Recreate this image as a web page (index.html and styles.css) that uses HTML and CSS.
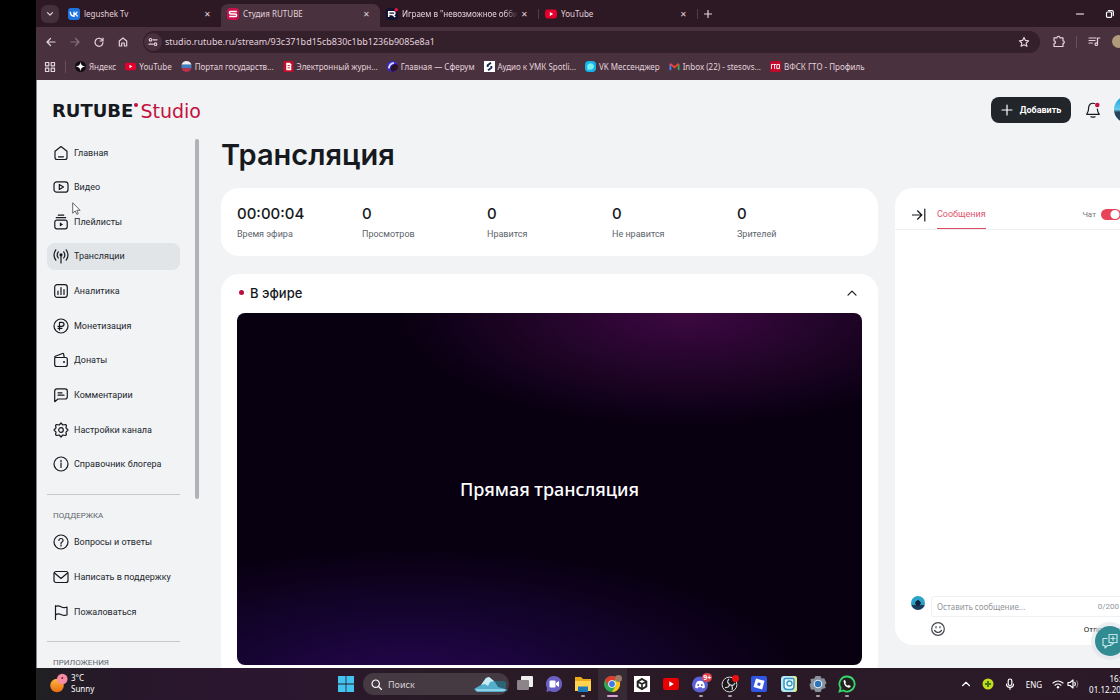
FILE: index.html
```html
<!DOCTYPE html>
<html lang="ru">
<head>
<meta charset="utf-8">
<title>Студия RUTUBE</title>
<link rel="stylesheet" href="styles.css">
</head>
<body>
<div class="screen">
  <header class="browser">
    <div class="tabs">
      <button class="tab-search" aria-label="Поиск вкладок"><svg width="8" height="8" viewBox="0 0 8 8"><path d="M1.5 2.7 4 5.2 6.5 2.7" class="ln"/></svg></button>
      <div class="tab"><svg class="fav" viewBox="0 0 12 12"><rect width="12" height="12" rx="3" fill="#1f74e0"/><path d="M2.3 3.8C2.4 7 3.9 8.3 6 8.3V3.8M6 6.1C7.6 6 8.7 5 9.2 3.8M6 6.1C7.8 6.2 9.1 7.1 9.6 8.4" fill="none" stroke="#fff" stroke-width="1.4"/></svg><span class="tab-title">legushek Tv</span><button class="x" aria-label="Закрыть">✕</button></div>
      <div class="tab active"><svg class="fav" viewBox="0 0 12 12"><rect width="12" height="12" rx="3" fill="#c9104b"/><path d="M9.8 3.4H3.4Q2.4 3.4 2.4 4.6T3.4 5.9H8.6Q9.6 5.9 9.6 7.2T8.6 8.5H2.2" fill="none" stroke="#fff" stroke-width="1.5"/></svg><span class="tab-title">Студия RUTUBE</span><button class="x" aria-label="Закрыть">✕</button></div>
      <div class="tab split"><svg class="fav" viewBox="0 0 12 12"><rect width="12" height="12" rx="3" fill="#10132f"/><circle cx="10.2" cy="1.8" r="1.8" fill="#ed143b"/><path d="M2.7 9V3.8H7.6Q9 3.8 9 5.2T7.6 6.6H2.7M6.7 6.6 9.2 9" fill="none" stroke="#fff" stroke-width="1.5"/></svg><span class="tab-title fade">Играем в "невозможное обби</span><button class="x" aria-label="Закрыть">✕</button></div>
      <div class="tab split"><svg class="fav" viewBox="0 0 12 12"><rect y="1.5" width="12" height="9" rx="2.4" fill="#e3002d"/><path d="M4.8 4v4l3.4-2z" fill="#fff"/></svg><span class="tab-title">YouTube</span><button class="x" aria-label="Закрыть">✕</button></div>
      <button class="new-tab" aria-label="Новая вкладка"><svg width="8" height="8" viewBox="0 0 8 8"><path d="M4 .5v7M.5 4h7" class="ln"/></svg></button>
      <div class="win-buttons">
        <button aria-label="Свернуть"><svg width="10" height="10" viewBox="0 0 10 10"><path d="M1.5 5h7" class="ln"/></svg></button>
        <button aria-label="Развернуть"><svg width="10" height="10" viewBox="0 0 10 10"><rect x="1.5" y="3" width="5" height="5.4" rx="1" class="ln"/><path d="M3.4 1.6H7Q8.3 1.6 8.3 3v3.6" class="ln"/></svg></button>
      </div>
    </div>
    <div class="toolbar">
      <div class="nav-buttons">
        <button aria-label="Назад"><svg width="12" height="12" viewBox="0 0 12 12"><path d="M10 6H2M5.5 2.5 2 6l3.5 3.5" class="ln"/></svg></button>
        <button class="off" aria-label="Вперёд"><svg width="12" height="12" viewBox="0 0 12 12"><path d="M2 6h8M6.5 2.5 10 6 6.500 9.500" class="ln"/></svg></button>
        <button aria-label="Обновить"><svg width="12" height="12" viewBox="0 0 12 12"><path d="M9.600 4.500A4 4 0 1 0 10 6.500M10 2v3H7" class="ln"/></svg></button>
        <button aria-label="Домой"><svg width="12" height="12" viewBox="0 0 12 12"><path d="M2.300 5 6 2l3.700 3v5H7.300V7H4.700v3H2.300z" class="ln"/></svg></button>
      </div>
      <div class="omnibox">
        <button class="site" aria-label="Сведения о сайте"><svg width="10" height="10" viewBox="0 0 10 10"><path d="M5 2.800h4M1 7.200h4" class="ln"/><circle cx="2.500" cy="2.800" r="1.300" class="ln"/><circle cx="7.500" cy="7.200" r="1.300" class="ln"/></svg></button>
        <input class="url" aria-label="Адрес" value="studio.rutube.ru/stream/93c371bd15cb830c1bb1236b9085e8a1">
        <button aria-label="В закладки"><svg width="12" height="12" viewBox="0 0 12 12"><path d="m6 1.400 1.400 3 3.200.4-2.400 2.200.7 3.300L6 8.700l-2.900 1.600.7-3.300L1.400 4.800l3.200-.4z" class="ln"/></svg></button>
      </div>
      <div class="ext">
        <button aria-label="Расширения"><svg width="13" height="13" viewBox="0 0 13 13"><path d="M2 2.800h3q0-1.500 1.500-1.500T8 2.800h3v3q1.300 0 1.300 1.300T11 8.400v3.100H2V8.600q1.500-.1 1.500-1.400T2 5.800z" class="ln"/></svg></button>
        <i class="sep"></i>
        <button aria-label="Медиа"><svg width="13" height="13" viewBox="0 0 13 13"><path d="M1 3h7M1 5.500h6M1 8h3.500M9.500 9V3h2.300" class="ln"/><circle cx="8.300" cy="9.200" r="1.300" class="ln"/></svg></button>
        <span class="profile"></span>
      </div>
    </div>
    <nav class="bookmarks">
      <button aria-label="Все вкладки"><svg width="12" height="12" viewBox="0 0 12 12"><path d="M1.500 1.500h3.300v3.300H1.500zM7.200 1.500h3.300v3.300H7.200zM1.500 7.200h3.300v3.300H1.500zM7.200 7.200h3.300v3.300H7.200z" class="ln"/></svg></button>
      <i class="sep"></i>
      <a href="#"><svg viewBox="0 0 12 12"><circle cx="6" cy="6" r="6" fill="#140d12"/><path d="M6 .8Q6.300 5.700 11.200 6 6.300 6.300 6 11.200 5.700 6.300.8 6 5.700 5.700 6 .8z" fill="#fff"/></svg><span>Яндекс</span></a>
      <a href="#"><svg viewBox="0 0 12 12"><rect y="2" width="12" height="8" rx="2" fill="#e3002d"/><path d="M4.900 4.200v3.600L8 6z" fill="#fff"/></svg><span>YouTube</span></a>
      <a href="#"><svg viewBox="0 0 12 12"><path d="M.6 4a5.700 5.700 0 0 1 10.800 0z" fill="#eee"/><path d="M.6 4h10.800v4H.6z" fill="#3d7fc2"/><path d="M.6 8a5.700 5.700 0 0 0 10.800 0z" fill="#c12f50"/></svg><span>Портал государств...</span></a>
      <a href="#"><svg viewBox="0 0 12 12"><rect x=".5" width="11" height="12" rx="1" fill="#c20d2b"/><path d="M3.500 2h4l1.500 1.500V10H3.500z" fill="#fff"/><path d="M5 5h2.500M5 7.500h2.500" stroke="#c20d2b"/></svg><span>Электронный журн...</span></a>
      <a href="#"><svg viewBox="0 0 12 12"><circle cx="6" cy="6" r="6" fill="#3c2ad1"/><path d="M12 4.500A5 5 0 0 0 5 11.500 6 6 0 0 0 12 4.500z" fill="#2c1425"/><path d="M2 8Q2.500 3 7.500 2" stroke="#d5dcff" stroke-width="2" fill="none"/></svg><span>Главная — Сферум</span></a>
      <a href="#"><svg viewBox="0 0 12 12"><rect width="12" height="12" fill="#fff"/><path d="M7.600 2 4 4.500v2M4.500 10 8 7.500v-2" stroke="#172553" stroke-width="2" fill="none"/></svg><span>Аудио к УМК Spotli...</span></a>
      <a href="#"><svg viewBox="0 0 12 12"><rect width="12" height="12" rx="4" fill="#16b2ea"/><path d="M6 2.500a4 3.500 0 1 1-1.500 6.800L2.500 10l.4-2.200A4 3.500 0 0 1 6 2.500z" fill="#77efec"/></svg><span>VK Мессенджер</span></a>
      <a href="#"><svg viewBox="0 0 12 12"><path d="M1.500 10V3.500" stroke="#4285f4" stroke-width="2"/><path d="M10.500 10V3.500" stroke="#34a853" stroke-width="2"/><path d="M1.200 3 6 6.800 10.800 3" stroke="#ea4335" stroke-width="2" fill="none"/></svg><span>Inbox (22) - stesovs...</span></a>
      <a href="#"><svg viewBox="0 0 12 12"><rect width="12" height="12" rx="2" fill="#c3092b"/><path d="M1.600 8.700V3.800h2.300M5 8.700V3.800M4 3.800h2.500M5 8.200M7.400 3.800h2.900v4.500H7.400z" stroke="#fff" fill="none"/></svg><span>ВФСК ГТО - Профиль</span></a>
    </nav>
  </header>

  <div class="page">
    <div class="top">
      <a href="#" class="logo"><b>RUTUBE</b><i></i><span>Studio</span></a>
      <div class="top-actions">
        <button class="add"><svg width="12" height="12" viewBox="0 0 12 12"><path d="M6 1v10M1 6h10" class="ln"/></svg>Добавить</button>
        <button class="bell" aria-label="Уведомления"><svg width="16" height="18" viewBox="0 0 16 18"><path d="M9.500 2.500C5.500 1.500 3.700 4 3.700 6.500 3.700 10 3 11.500 1.700 13.300h12.600C13 11.500 12.400 10 12.300 8" class="ln"/><path d="M6 15.700q2 1 4 0" class="ln"/><circle cx="12.300" cy="4" r="2.300" fill="#c3123f"/></svg></button>
        <span class="avatar"></span>
      </div>
    </div>
    <div class="body">
      <aside class="side">
        <nav>
          <ul class="menu ten">
            <li><a href="#"><svg viewBox="0 0 16 16"><path d="M2 6.300 8 1.500l6 4.800v6.200q0 2-2 2H4q-2 0-2-2zM5.500 11.800h5" class="ln"/></svg>Главная</a></li>
            <li><a href="#"><svg viewBox="0 0 16 16"><rect x="1" y="2.800" width="14" height="10.400" rx="2.800" class="ln"/><path d="M6.300 5.500v5L10.500 8z" class="ln"/></svg>Видео</a></li>
            <li><a href="#"><svg viewBox="0 0 16 16"><rect x="1.800" y="6.200" width="12.400" height="8.600" rx="2" class="ln"/><path d="M3.300 3.700h9.400M5.300 1.200h5.400" class="ln"/><path d="M6.800 8.300v4.200l3.300-2.100z" fill="#16191d"/></svg>Плейлисты</a></li>
            <li><a href="#" class="on"><svg viewBox="0 0 16 16"><circle cx="8" cy="6.800" r="1.600" fill="#16191d"/><path d="M8 7v8M5.300 10Q3 7 5.300 3.800M10.700 10Q13 7 10.700 3.800M2.800 12.200Q-.8 7 2.800 1.800M13.200 12.200Q16.800 7 13.200 1.800" class="ln"/></svg>Трансляции</a></li>
            <li><a href="#"><svg viewBox="0 0 16 16"><rect x="1.700" y="1.700" width="12.600" height="12.600" rx="2.500" class="ln"/><path d="M5 8v3.500M8 4.500v7M11 6.500v5" class="ln"/></svg>Аналитика</a></li>
            <li><a href="#"><svg viewBox="0 0 16 16"><circle cx="8" cy="8" r="7" class="ln"/><path d="M6.500 12V4.300h2.300q2.200 0 2.200 2T8.800 8.400H5M5 10.300h4" class="ln"/></svg>Монетизация</a></li>
            <li><a href="#"><svg viewBox="0 0 16 16"><path d="M1.700 6v6.500q0 2 2 2h8.600q2 0 2-2V7.500q0-2-2-2H3q-1.300 0-1.300-1L9.500 1.500q1-.3 1.200.8l.5 3" class="ln"/><circle cx="11" cy="10" r="1" fill="#16191d"/></svg>Донаты</a></li>
            <li><a href="#"><svg viewBox="0 0 16 16"><path d="M1.700 14.700V4q0-2.200 2.200-2.200h8.200q2.200 0 2.200 2.200v5.800q0 2.200-2.200 2.200H5zM5 5.800h4M5 8.200h6" class="ln"/></svg>Комментарии</a></li>
            <li><a href="#"><svg viewBox="0 0 16 16"><path d="m8 1 1.800 2 2.600-.5 1 .8-.4 2.500L15 8l-2 2.200.4 2.500-1 .8-2.600-.5L8 15l-1.800-2-2.600.5-1-.8.400-2.500L1 8l2-2.200-.4-2.500 1-.8 2.600.5z" class="ln"/><circle cx="8" cy="8" r="2.300" class="ln"/></svg>Настройки канала</a></li>
            <li><a href="#"><svg viewBox="0 0 16 16"><circle cx="8" cy="8" r="7" class="ln"/><path d="M8 7.200v4.300M8 4.300v1.400" class="ln"/></svg>Справочник блогера</a></li>
          </ul>
          <h2>ПОДДЕРЖКА</h2>
          <ul class="menu">
            <li><a href="#"><svg viewBox="0 0 16 16"><circle cx="8" cy="8" r="7" class="ln"/><path d="M5.900 6.500Q6 4.500 8 4.500t2.100 1.800Q10.100 7.400 9 8T8 9.500M8 10.800v1.300" class="ln"/></svg>Вопросы и ответы</a></li>
            <li><a href="#"><svg viewBox="0 0 16 16"><rect x="1" y="2.500" width="14" height="11" rx="2" class="ln"/><path d="m1.500 4 6.500 5.500L14.500 4" class="ln"/></svg>Написать в поддержку</a></li>
            <li><a href="#"><svg viewBox="0 0 16 16"><path d="M2.500 15.500V1.500M2.500 2.500Q5 1 8 2.700t6 .3v8q-3 1-6-.5t-5.500.5" class="ln"/></svg>Пожаловаться</a></li>
          </ul>
          <h2>ПРИЛОЖЕНИЯ</h2>
        </nav>
        <div class="scrollbar"></div>
      </aside>
      <main>
        <h1>Трансляция</h1>
        <div class="columns">
          <div class="stream">
            <dl class="card stats">
              <div><dd>00:00:04</dd><dt>Время эфира</dt></div>
              <div><dd>0</dd><dt>Просмотров</dt></div>
              <div><dd>0</dd><dt>Нравится</dt></div>
              <div><dd>0</dd><dt>Не нравится</dt></div>
              <div><dd>0</dd><dt>Зрителей</dt></div>
            </dl>
            <section class="card live">
              <div class="live-head"><h3>В эфире</h3><button aria-label="Свернуть"><svg width="12" height="12" viewBox="0 0 12 12"><path d="M2 8.200 6 4.200l4 4" class="ln"/></svg></button></div>
              <div class="video">Прямая трансляция</div>
            </section>
          </div>
          <section class="card chat">
            <div class="chat-head">
              <button class="collapse" aria-label="Скрыть чат"><svg width="14" height="14" viewBox="0 0 14 14"><path d="M0 7h9.500M5.500 2.800 9.800 7l-4.300 4.200M12.800 1v12" class="ln"/></svg></button>
              <button class="chat-tab">Сообщения</button>
              <label class="switch">Чат<input type="checkbox" checked></label>
            </div>
            <div class="messages"></div>
            <form class="compose">
              <span class="me"></span>
              <div class="field"><input type="text" aria-label="Сообщение" placeholder="Оставить сообщение..."><span>0/200</span></div>
              <div class="row">
                <button type="button" aria-label="Смайлы"><svg width="14" height="14" viewBox="0 0 14 14"><circle cx="7" cy="7" r="6.300" class="ln"/><path d="M3.500 8.500Q7 12.500 10.500 8.500M5 4.600v1.200M9 4.600v1.200" class="ln"/></svg></button>
                <button type="button" class="send">Отправить</button>
              </div>
            </form>
          </section>
        </div>
      </main>
    </div>
    <button class="help" aria-label="Помощь"><svg width="16" height="16" viewBox="0 0 16 16"><path d="M7 1.500h8v8h-3L10.500 11V9.500H7zM5 5.500H1v7h2V15l2.500-2.500H9v-2M11 3.500v4M9 5.500h4" class="ln"/></svg></button>
    <svg class="cursor" width="9" height="13" viewBox="0 0 9 13"><path d="M.7.8v10.400l2.500-2.300 1.600 3.400 1.500-.7-1.500-3.300h3.300z" fill="#fff" stroke="#3d4147" stroke-width=".8"/></svg>
  </div>

  <footer class="taskbar">
    <div class="weather"><svg width="18" height="20" viewBox="0 0 18 20"><defs><linearGradient id="sun" x2="0" y2="1"><stop stop-color="#ffb73b"/><stop offset="1" stop-color="#e86c14"/></linearGradient></defs><circle cx="7" cy="12.500" r="6.800" fill="url(#sun)"/><circle cx="12.300" cy="6" r="5.300" fill="#f58ba5"/><circle cx="12.300" cy="5" r="1" fill="#7c2447"/></svg><p>3°C<br>Sunny</p></div>
    <button class="start" aria-label="Пуск"><svg width="16" height="16" viewBox="0 0 16 16"><path d="M0 0h7.600v7.600H0zM8.400 0H16v7.600H8.400zM0 8.400h7.600V16H0zM8.400 8.400H16V16H8.400z" fill="#42c3f0"/></svg></button>
    <label class="search"><svg width="11" height="11" viewBox="0 0 11 11"><circle cx="4.700" cy="4.700" r="3.700" class="ln"/><path d="m7.500 7.500 3 3" class="ln"/></svg><input type="text" placeholder="Поиск" aria-label="Поиск"><svg width="34" height="16" viewBox="0 0 34 16"><path d="M15 5h14q3 0 3 3v6H15z" fill="#2b6575"/><path d="M0 13 7 9l5-7 3-1 6 5 3 5 10 3-5 2H3z" fill="#53aecd"/><path d="m7 9 5-7 3-1 5 4-4 1-2 4-3-2z" fill="#c7ecf5"/><path d="M2 14h29" stroke="#9edcec" stroke-width="1.500"/></svg></label>
    <div class="apps">
      <button aria-label="Представление задач"><svg viewBox="0 0 18 18"><rect x="5" y="1" width="12" height="11" rx="1" fill="#eee"/><rect x="1" y="5" width="12" height="10" rx="1" fill="#8c8488"/></svg></button>
      <button aria-label="Чат"><svg viewBox="0 0 18 18"><path d="M9 1a8 8 0 1 1-4 14.900L1.500 17 2 13A8 8 0 0 1 9 1z" fill="#6b5fc4"/><rect x="4.500" y="5.500" width="6" height="7" rx="1" fill="#fff"/><path d="m11 8 3-2v6l-3-2z" fill="#fff"/></svg></button>
      <button class="run" aria-label="Проводник"><svg viewBox="0 0 18 18"><path d="M1 2h6l2 2h8v12H1z" fill="#e9a91d"/><path d="M1 6h16v10H1z" fill="#ffd34d"/><path d="M4 11.500h10V17H4z" fill="#1d79bd"/></svg></button>
      <button class="run wide" aria-label="Chrome"><svg viewBox="0 0 18 18"><circle cx="8" cy="9" r="8" fill="#2fa653"/><path d="M1.100 5A8 8 0 0 1 15 5H8L4.500 11z" fill="#e33b2e"/><path d="M15 5a8 8 0 0 1-7 12l3.500-6L11 5z" fill="#fbc619"/><circle cx="8" cy="9" r="3.800" fill="#fff"/><circle cx="8" cy="9" r="2.900" fill="#3b79e8"/><circle cx="14.500" cy="3.500" r="3.500" fill="#9c7a65"/></svg></button>
      <button aria-label="Unity"><svg viewBox="0 0 18 18"><path d="M1 1h16v16H1z" fill="#fff"/><path d="m9 4 4.300 2.500v5L9 14l-4.300-2.500v-5z" fill="none" stroke="#222" stroke-width="2"/><path d="M9 9v5M9 9 4.500 6.500M9 9l4.500-2.500" stroke="#222" stroke-width="1.600"/></svg></button>
      <button aria-label="YouTube"><svg viewBox="0 0 18 18"><rect x="1" y="3" width="16" height="12" rx="2" fill="#e80000"/><path d="M7.300 6.300v5.400l4.500-2.700z" fill="#fff"/></svg></button>
      <button class="run" aria-label="Discord"><svg viewBox="0 0 18 18"><circle cx="8" cy="9.500" r="8" fill="#5b62d6"/><path d="M5 6.500q3-1.300 6 0 2 2.500 2 6l-2.300 1-1-1.300H6.300l-1 1.300-2.300-1q0-3.500 2-6z" fill="#fff"/><circle cx="6.200" cy="10" r="1" fill="#5b62d6"/><circle cx="9.800" cy="10" r="1" fill="#5b62d6"/></svg><em>9+</em></button>
      <button class="run" aria-label="OBS"><svg viewBox="0 0 18 18"><circle cx="8.500" cy="9.500" r="7.400" fill="#1b181c" stroke="#d7d3d6"/><path d="M8 4q-3 3 .5 5.500T14 8M8.500 9.500Q8 13 4 12.500M8.500 9.500q4 1 2.500 5.500" fill="none" stroke="#d7d3d6" stroke-width="1.200"/><circle cx="14.500" cy="3.500" r="3.500" fill="#ed1010"/></svg></button>
      <button class="run" aria-label="Roblox"><svg viewBox="0 0 18 18"><rect x="1" y="1" width="16" height="16" rx="2" fill="#3157e2"/><path d="m6 3.500 8.500 2.300-2.300 8.700L3.500 12z" fill="#fff"/><path d="m7.900 7.400 2.800.7-.7 2.800-2.800-.7z" fill="#3157e2"/></svg></button>
      <button class="run" aria-label="Студия"><svg viewBox="0 0 18 18"><rect x="1" y="1" width="16" height="16" rx="3" fill="#b9eaf0"/><path d="M13 1h1q3 0 3 3v10q0 3-3 3h-1z" fill="#d9e99a"/><path d="M4 5q0-1.500 1.500-1.500h7Q14 3.500 14 5v6q0 3.500-3.500 3.500h-3Q4 14.500 4 11z" fill="#e8faff" stroke="#3795c8" stroke-width="1.500"/><circle cx="9.500" cy="8.500" r="2.500" fill="none" stroke="#3795c8" stroke-width="1.300"/></svg></button>
      <button class="run" aria-label="Параметры"><svg viewBox="0 0 18 18"><path d="M6.500 1h5l1 2.500 2.700-.2L17.500 8l-1.600 2 .8 3-3.700 1-1.500 3h-5L5 14.500l-3 .2L.5 9.500 2 7.700 1.500 4l3.800-.5z" fill="#89919d"/><circle cx="9" cy="9" r="4.300" fill="#e6edf2"/><circle cx="9" cy="9" r="3.200" fill="#2a75b8"/></svg></button>
      <button class="run" aria-label="WhatsApp"><svg viewBox="0 0 18 18"><path d="M9 1.500a7.500 7.500 0 1 1-3.600 14L1.500 16.500 2.600 13A7.500 7.500 0 0 1 9 1.500z" fill="#23201f" stroke="#38d56f" stroke-width="1.800"/><path d="M5.500 6q1-1.500 1.800-.5L8 7.300l-.7 1q.8 1.700 2.400 2.400l1-.8 2 1q.3 1.700-2 1.900-4.500-.8-5.200-6.800z" fill="#f4fff5"/></svg></button>
    </div>
    <div class="tray">
      <svg viewBox="0 0 12 12"><path d="M2.500 7.700 6 4.300l3.500 3.400" class="ln"/></svg>
      <svg viewBox="0 0 12 12"><circle cx="6" cy="6" r="5.500" fill="#c4dc1d"/><path d="M6 3v6M3 6h6" stroke="#42780d" stroke-width="2"/></svg>
      <svg viewBox="0 0 12 12"><rect x="4.200" y="1" width="3.600" height="6.500" rx="1.800" class="ln"/><path d="M2.500 6q0 3.300 3.500 3.300T9.500 6M6 9.300v2" class="ln"/></svg>
      <span>ENG</span>
      <div class="status">
        <svg viewBox="0 0 12 12"><path d="M1 5q5-4 10 0M3 7.200q3-2.400 6 0" class="ln"/><circle cx="6" cy="9.200" r="1.200" fill="#fff"/></svg>
        <svg viewBox="0 0 12 12"><path d="M1 4.500h2L6 2v8L3 7.500H1zM7.800 4.300q1.200 1.700 0 3.400" class="ln"/><path d="M9.700 2.800q2 3.200 0 6.400" class="ln dim"/></svg>
      </div>
      <p class="clock">16:05<br>01.12.2024</p>
    </div>
  </footer>
</div>
</body>
</html>
```
FILE: styles.css
```css
* { box-sizing: border-box; }
body {
  margin: 0;
  height: 100vh;
  overflow: hidden;
  background: #000;
  font-family: Roboto, "Liberation Sans", sans-serif;
  color: #16191d;
}
button {
  border: 0;
  padding: 0;
  background: none;
  color: inherit;
  font: inherit;
  display: flex;
  align-items: center;
  justify-content: center;
}
a { color: inherit; text-decoration: none; }
input { font: inherit; color: inherit; border: 0; padding: 0; background: none; min-width: 0; outline: 0; }
h1, h2, h3, p, ul, dl, dd { margin: 0; padding: 0; }
ul { list-style: none; }
svg { flex: none; }
.ln { fill: none; stroke: currentColor; stroke-width: 1.2; stroke-linecap: round; stroke-linejoin: round; }
.dim { opacity: .4; }

/* The display starts past the black strip and runs off the right side */
.screen {
  margin-left: 36px;
  width: 100vw;
  height: 100vh;
  display: flex;
  flex-direction: column;
}

/* Browser */
.browser { background: #49313e; color: #e3d3dc; font: 9px/12px "Noto Sans", sans-serif; }
.tabs { display: flex; align-items: center; height: 27px; padding-left: 5px; background: #2d1924; }
.tab-search { width: 18px; height: 18px; margin-right: 3px; border-radius: 6px; background: #44303b; }
.tab { display: flex; align-items: center; width: 159px; height: 23px; margin-top: 4px; padding: 0 8px 4px 6px; }
.tab.active { background: #49313e; border-radius: 7px 7px 0 0; }
.fav { width: 12px; height: 12px; margin-right: 4px; }
.tab-title { flex: 1; overflow: hidden; white-space: nowrap; font-size: 8px; }
.fade { mask-image: linear-gradient(90deg, #000 88%, transparent); }
.x { width: 12px; font-size: 8px; }
.split { border-right: 1px solid transparent; border-image: linear-gradient(transparent 25%, #543d49 25% 65%, transparent 65%) 1; }
.new-tab { width: 20px; height: 20px; }
.win-buttons { display: flex; gap: 20px; margin-left: auto; padding-right: 41px; color: #fff; }
.toolbar { display: flex; align-items: center; height: 29px; padding: 0 16px 0 9px; }
.nav-buttons { display: flex; gap: 12px; width: 98px; }
.off { opacity: .4; }
.omnibox { flex: 1; display: flex; align-items: center; gap: 3px; height: 22px; padding: 0 10px 0 1px; border-radius: 11px; background: #33202b; }
.site { width: 18px; height: 18px; border-radius: 50%; background: #49313e; }
.url { flex: 1; }
.ext { display: flex; align-items: center; gap: 11px; width: 100px; padding-left: 12px; }
.sep { width: 1px; height: 12px; background: #6b4f5e; }
.profile { width: 13px; height: 13px; flex: none; border-radius: 50%; background: #b09a7b; }
.bookmarks { display: flex; align-items: center; height: 24px; padding: 0 0 3px 8px; font-size: 8px; gap: 9px; }
.bookmarks a { display: flex; align-items: center; gap: 3px; }
.bookmarks a svg { width: 11px; height: 11px; }
.bookmarks span { white-space: nowrap; }

/* Page */
.page { position: relative; flex: 1; min-height: 0; overflow: hidden; display: flex; flex-direction: column; background: #f1f3f5; border-left: 1px solid #85868a; }
.top { display: flex; align-items: center; justify-content: space-between; height: 59px; padding: 0 15px; }
.logo { display: flex; align-items: center; font: 19px/20px "DejaVu Sans", sans-serif; color: #c4113f; padding-top: 2px; }
.logo b { color: #16191d; font-size: 18px; }
.logo i { width: 4px; height: 4px; margin: 0 2px 12px 1px; border-radius: 50%; background: #c4113f; }
.top-actions { display: flex; align-items: center; }
.add { gap: 7px; width: 80px; height: 26px; border-radius: 8px; background: #22252a; color: #fff; font-size: 9px; font-weight: 700; }
.bell { width: 16px; margin: 0 13px 0 14px; }
.avatar { width: 27px; height: 27px; border-radius: 50%; background: linear-gradient(#159ee0, #66cce9 50%, #24455e 60%); }
.body { flex: 1; min-height: 0; display: flex; }

.side { display: flex; justify-content: space-between; width: 162px; padding-left: 10px; flex: none; }
.side nav { width: 133px; }
.menu { display: flex; flex-direction: column; gap: 8px; }
.menu.ten { height: 339px; gap: 0; justify-content: space-between; }
.menu a { display: flex; align-items: center; gap: 5px; height: 27px; padding: 0 6px; border-radius: 8px; font-size: 9px; white-space: nowrap; color: #24282d; }
.menu svg { width: 16px; height: 16px; color: #16191d; }
.menu .on { background: #e1e5e8; }
.side h2 { margin-top: 16px; padding: 15px 6px 6px; border-top: 1px solid #c6c9cc; font-size: 8px; line-height: 12px; font-weight: 400; color: #60656b; }
.scrollbar { width: 4px; height: 360px; border-radius: 2px; background: #afb2b6; }

main { flex: 1; min-width: 0; padding: 0 16px 0 22px; display: flex; flex-direction: column; }
h1 { font: 600 29px/32px Inter, sans-serif; margin-bottom: 17px; }
.columns { flex: 1; min-height: 0; display: flex; gap: 17px; }
.stream { flex: 1; min-width: 0; display: flex; flex-direction: column; gap: 18px; }
.card { background: #fff; border-radius: 18px; }
.stats { display: grid; grid-template-columns: repeat(5, 1fr); height: 68px; padding: 16px; }
.stats div { display: flex; flex-direction: column; gap: 3px; }
dd { font: 500 15px/20px Inter, sans-serif; }
dt { font-size: 9px; line-height: 14px; color: #60656b; }
.live { flex: none; padding: 0 16px 16px; }
.live-head { display: flex; align-items: center; justify-content: space-between; height: 39px; padding: 0 4px 2px 2px; }
h3 { display: flex; align-items: center; gap: 6px; font: 500 13px/16px Inter, sans-serif; }
h3::before { content: ""; width: 5px; height: 5px; border-radius: 50%; background: #b90f3d; }
.video {
  display: flex;
  align-items: center;
  justify-content: center;
  aspect-ratio: 16 / 9;
  border-radius: 8px;
  color: #fff;
  font: 500 18px/24px "Noto Sans", sans-serif;
  background:
    radial-gradient(ellipse 46% 32% at 72% 0, #3d0842 0, #25052c 45%, transparent 100%),
    radial-gradient(ellipse 62% 38% at 28% 105%, #260650 0, #150430 50%, transparent 100%),
    #080011;
}

.chat { display: flex; flex-direction: column; width: 245px; margin-bottom: 23px; font-size: 8px; }
.chat-head { display: flex; align-items: stretch; height: 42px; padding: 12px 19px 0 16px; border-bottom: 1px solid #edeff1; }
.collapse { width: 15px; margin-right: 11px; }
.chat-tab { height: 29px; border-bottom: 1px solid #d94b63; color: #e0566d; font-size: 9px; }
.switch { display: flex; align-items: center; gap: 5px; margin-left: auto; color: #74787e; }
.switch input { appearance: none; width: 20px; height: 11px; margin: 0; border-radius: 6px; background: radial-gradient(circle at 14px 50%, #fff 4px, #e84459 5px); }
.messages { flex: 1; }
.compose { display: grid; grid-template-columns: 15px 1fr; gap: 3px 5px; padding: 0 14px 7px 16px; }
.me { width: 14px; height: 14px; border-radius: 50%; background: radial-gradient(circle at 50% 50%, #15223c 25%, transparent 30%), linear-gradient(#2ba3c8 60%, #193d5c 65%); }
.field { display: flex; align-items: center; height: 21px; padding: 0 6px 0 5px; border: 1px solid #f0f1f3; border-radius: 3px; color: #92969b; }
.field input { flex: 1; font: 8px/12px "Noto Sans", sans-serif; }
.field input::placeholder { color: #92969b; }
.field span { font-size: 8px; }
.row { grid-column: 2; display: flex; justify-content: space-between; height: 18px; }
.row svg { color: #44484d; }
.send { padding-right: 2px; }
.help { position: absolute; right: 31px; top: 546px; width: 30px; height: 30px; border-radius: 50%; background: #318b92; color: #bfe5e5; box-shadow: 0 0 0 4px #dfe5e999; }
.cursor { position: absolute; left: 35px; top: 122px; }

/* Taskbar */
.taskbar { display: flex; align-items: center; height: 32px; color: #fff; font: 8px/11px "Noto Sans", sans-serif; background: linear-gradient(90deg, #202022, #28172b 8%, #2b1630 22%, #291b26 35%, #2b1928); }
.weather { display: flex; align-items: center; gap: 3px; width: 296px; padding: 0 0 3px 14px; }
.start { width: 28px; height: 28px; }
.search { display: flex; align-items: center; gap: 6px; width: 146px; height: 22px; margin: 0 1px 0 3px; padding: 0 1px 0 8px; border-radius: 11px; background: #453a42; font-size: 9px; }
.search input { flex: 1; }
.search input::placeholder { color: #d8d0d5; }
.apps { display: flex; width: 352px; height: 32px; }
.apps button { position: relative; flex: 1; }
.apps svg { width: 18px; height: 18px; }
.run::after { content: ""; position: absolute; bottom: 3px; width: 4px; height: 2px; border-radius: 1px; background: #a9a0a6; }
.wide { background: #382a34; }
.wide::after { width: 11px; background: #d7a5d5; }
.apps em { position: absolute; top: 5px; right: 3px; width: 10px; height: 9px; border-radius: 5px; background: #d9434d; font: 700 7px/9px "Noto Sans", sans-serif; }
.tray { display: flex; align-items: center; gap: 10px; margin-left: auto; padding-right: 26px; }
.tray svg { width: 12px; height: 12px; }
.status { display: flex; gap: 3px; }
.clock { text-align: right; }
```
